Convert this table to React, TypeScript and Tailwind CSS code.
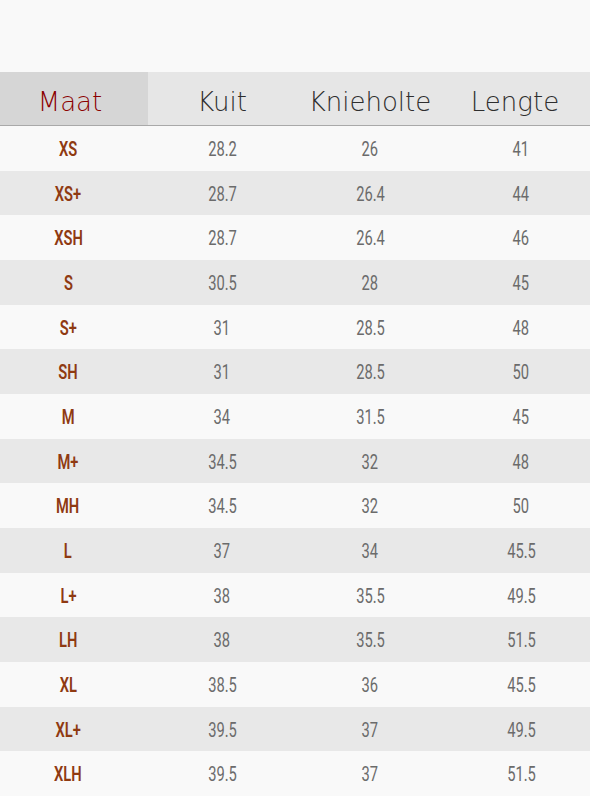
import React from 'react';

type Row = [string, string, string, string];

const rows: Row[] = [
  ['XS', '28.2', '26', '41'],
  ['XS+', '28.7', '26.4', '44'],
  ['XSH', '28.7', '26.4', '46'],
  ['S', '30.5', '28', '45'],
  ['S+', '31', '28.5', '48'],
  ['SH', '31', '28.5', '50'],
  ['M', '34', '31.5', '45'],
  ['M+', '34.5', '32', '48'],
  ['MH', '34.5', '32', '50'],
  ['L', '37', '34', '45.5'],
  ['L+', '38', '35.5', '49.5'],
  ['LH', '38', '35.5', '51.5'],
  ['XL', '38.5', '36', '45.5'],
  ['XL+', '39.5', '37', '49.5'],
  ['XLH', '39.5', '37', '51.5'],
];

const headFont = "font-['DejaVu_Sans',sans-serif] font-light";
const bodyFont = "font-['Roboto',sans-serif]";

// condensed look: Roboto squeezed horizontally
const Cell: React.FC<{ text: string; className: string }> = ({ text, className }) => (
  <div className={`flex justify-center ${className}`}>
    <span className="inline-block scale-x-[0.7]">{text}</span>
  </div>
);

const App: React.FC = () => {
  return (
    <div className="w-[590px] h-[796px] bg-[#f9f9f9] overflow-hidden">
      <div className="h-[72px]" />

      {/* Header */}
      <div className="grid grid-cols-[148px_148px_148px_146px] h-[54px] bg-[#e6e6e6] border-b border-[#a9a9a9]">
        <div className={`flex items-center justify-center pt-2 pr-2 bg-[#d6d6d6] text-[26px] text-[#8b0000] ${headFont}`}>
          Maat
        </div>
        <div className={`flex items-center justify-center pt-2 text-[26px] text-[#2e2e2e] ${headFont}`}>Kuit</div>
        <div className={`flex items-center justify-center pt-2 text-[26px] text-[#2e2e2e] ${headFont}`}>Knieholte</div>
        <div className={`flex items-center justify-center pt-2 pr-1 text-[26px] text-[#2e2e2e] ${headFont}`}>Lengte</div>
      </div>

      {/* Rows */}
      {rows.map((r, i) => (
        <div
          key={r[0]}
          className={`grid grid-cols-[148px_148px_148px_146px] h-[44.67px] items-center pt-[3px] ${bodyFont} text-[21px] ${
            i % 2 === 0 ? 'bg-[#f9f9f9]' : 'bg-[#e8e8e8]'
          }`}
        >
          <Cell text={r[0]} className="pr-3 font-semibold text-[#8f3a12]" />
          <Cell text={r[1]} className="text-[#6b6b6b]" />
          <Cell text={r[2]} className="text-[#6b6b6b]" />
          <Cell text={r[3]} className="pl-2 text-[#6b6b6b]" />
        </div>
      ))}
    </div>
  );
};

export default App;
